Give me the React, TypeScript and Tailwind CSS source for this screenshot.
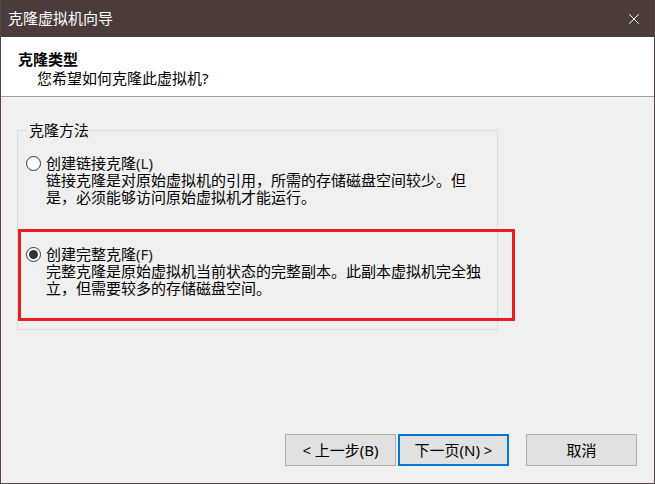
import { X } from "lucide-react";

const font = "font-['Noto_Sans','Noto_Sans_CJK_SC',sans-serif]";

const Radio = ({ checked }: { checked?: boolean }) => (
  <span className="w-[15px] h-[15px] rounded-full border border-[#333333] bg-white flex items-center justify-center shrink-0">
    {checked && <span className="w-[9px] h-[9px] rounded-full bg-[#333333]" />}
  </span>
);

const Option = ({
  checked,
  label,
  hotkey,
  lines,
}: {
  checked?: boolean;
  label: string;
  hotkey: string;
  lines: string[];
}) => (
  <div className="flex flex-col">
    <div className="flex items-center gap-[5px] h-[17px]">
      <Radio checked={checked} />
      <span>
        {label}
        <span className="text-[#1a1a1a]">({hotkey})</span>
      </span>
    </div>
    <div className="pl-[20px]">
      {lines.map((l) => (
        <div key={l}>{l}</div>
      ))}
    </div>
  </div>
);

export default function App() {
  return (
    <div
      className={`w-[655px] h-[484px] flex flex-col bg-[#f0f0f0] border-x border-b border-[#574746] text-[15px] leading-[17px] text-black ${font}`}>
      {/* Title bar */}
      <div className="h-[37px] bg-[#4b3c3b] flex items-center justify-between pl-[7px] pr-[11px] text-white shrink-0">
        <span className="text-[15px]">克隆虚拟机向导</span>
        <X size={18} strokeWidth={1.3} className="text-white" />
      </div>

      {/* Header */}
      <div className="h-[60px] bg-white border-b border-[#a0a0a0] pl-[17px] pt-[13px] leading-[19px] shrink-0">
        <div className="font-bold">克隆类型</div>
        <div className="pl-[19px]">您希望如何克隆此虚拟机?</div>
      </div>

      {/* Body */}
      <div className="relative flex-1 flex flex-col px-[16px] pt-[25px]">
        <fieldset className="w-[481px] h-[208px] border border-[#dcdcdc] px-[8px] pt-[16px]">
          <legend className="px-[2px] ml-[1px]">克隆方法</legend>
          <div className="flex flex-col gap-[40px]">
            <Option
              label="创建链接克隆"
              hotkey="L"
              lines={[
                "链接克隆是对原始虚拟机的引用，所需的存储磁盘空间较少。但",
                "是，必须能够访问原始虚拟机才能运行。",
              ]}
            />
            <Option
              checked
              label="创建完整克隆"
              hotkey="F"
              lines={[
                "完整克隆是原始虚拟机当前状态的完整副本。此副本虚拟机完全独",
                "立，但需要较多的存储磁盘空间。",
              ]}
            />
          </div>
        </fieldset>

        {/* annotation highlight */}
        <div className="absolute left-[17px] top-[132px] w-[497px] h-[92px] border-[3px] border-[#ed1c24]" />

        <div className="mt-auto mb-[17px] flex justify-end pr-[1px]">
          <button className="w-[111px] h-[32px] bg-[#e1e1e1] border border-[#adadad]">
            &lt; 上一步(B)
          </button>
          <button className="w-[111px] h-[32px] ml-[2px] bg-[#e1e1e1] border-2 border-[#0078d7]">
            下一页(N) &gt;
          </button>
          <button className="w-[111px] h-[32px] ml-[17px] bg-[#e1e1e1] border border-[#adadad]">
            取消
          </button>
        </div>
      </div>
    </div>
  );
}
